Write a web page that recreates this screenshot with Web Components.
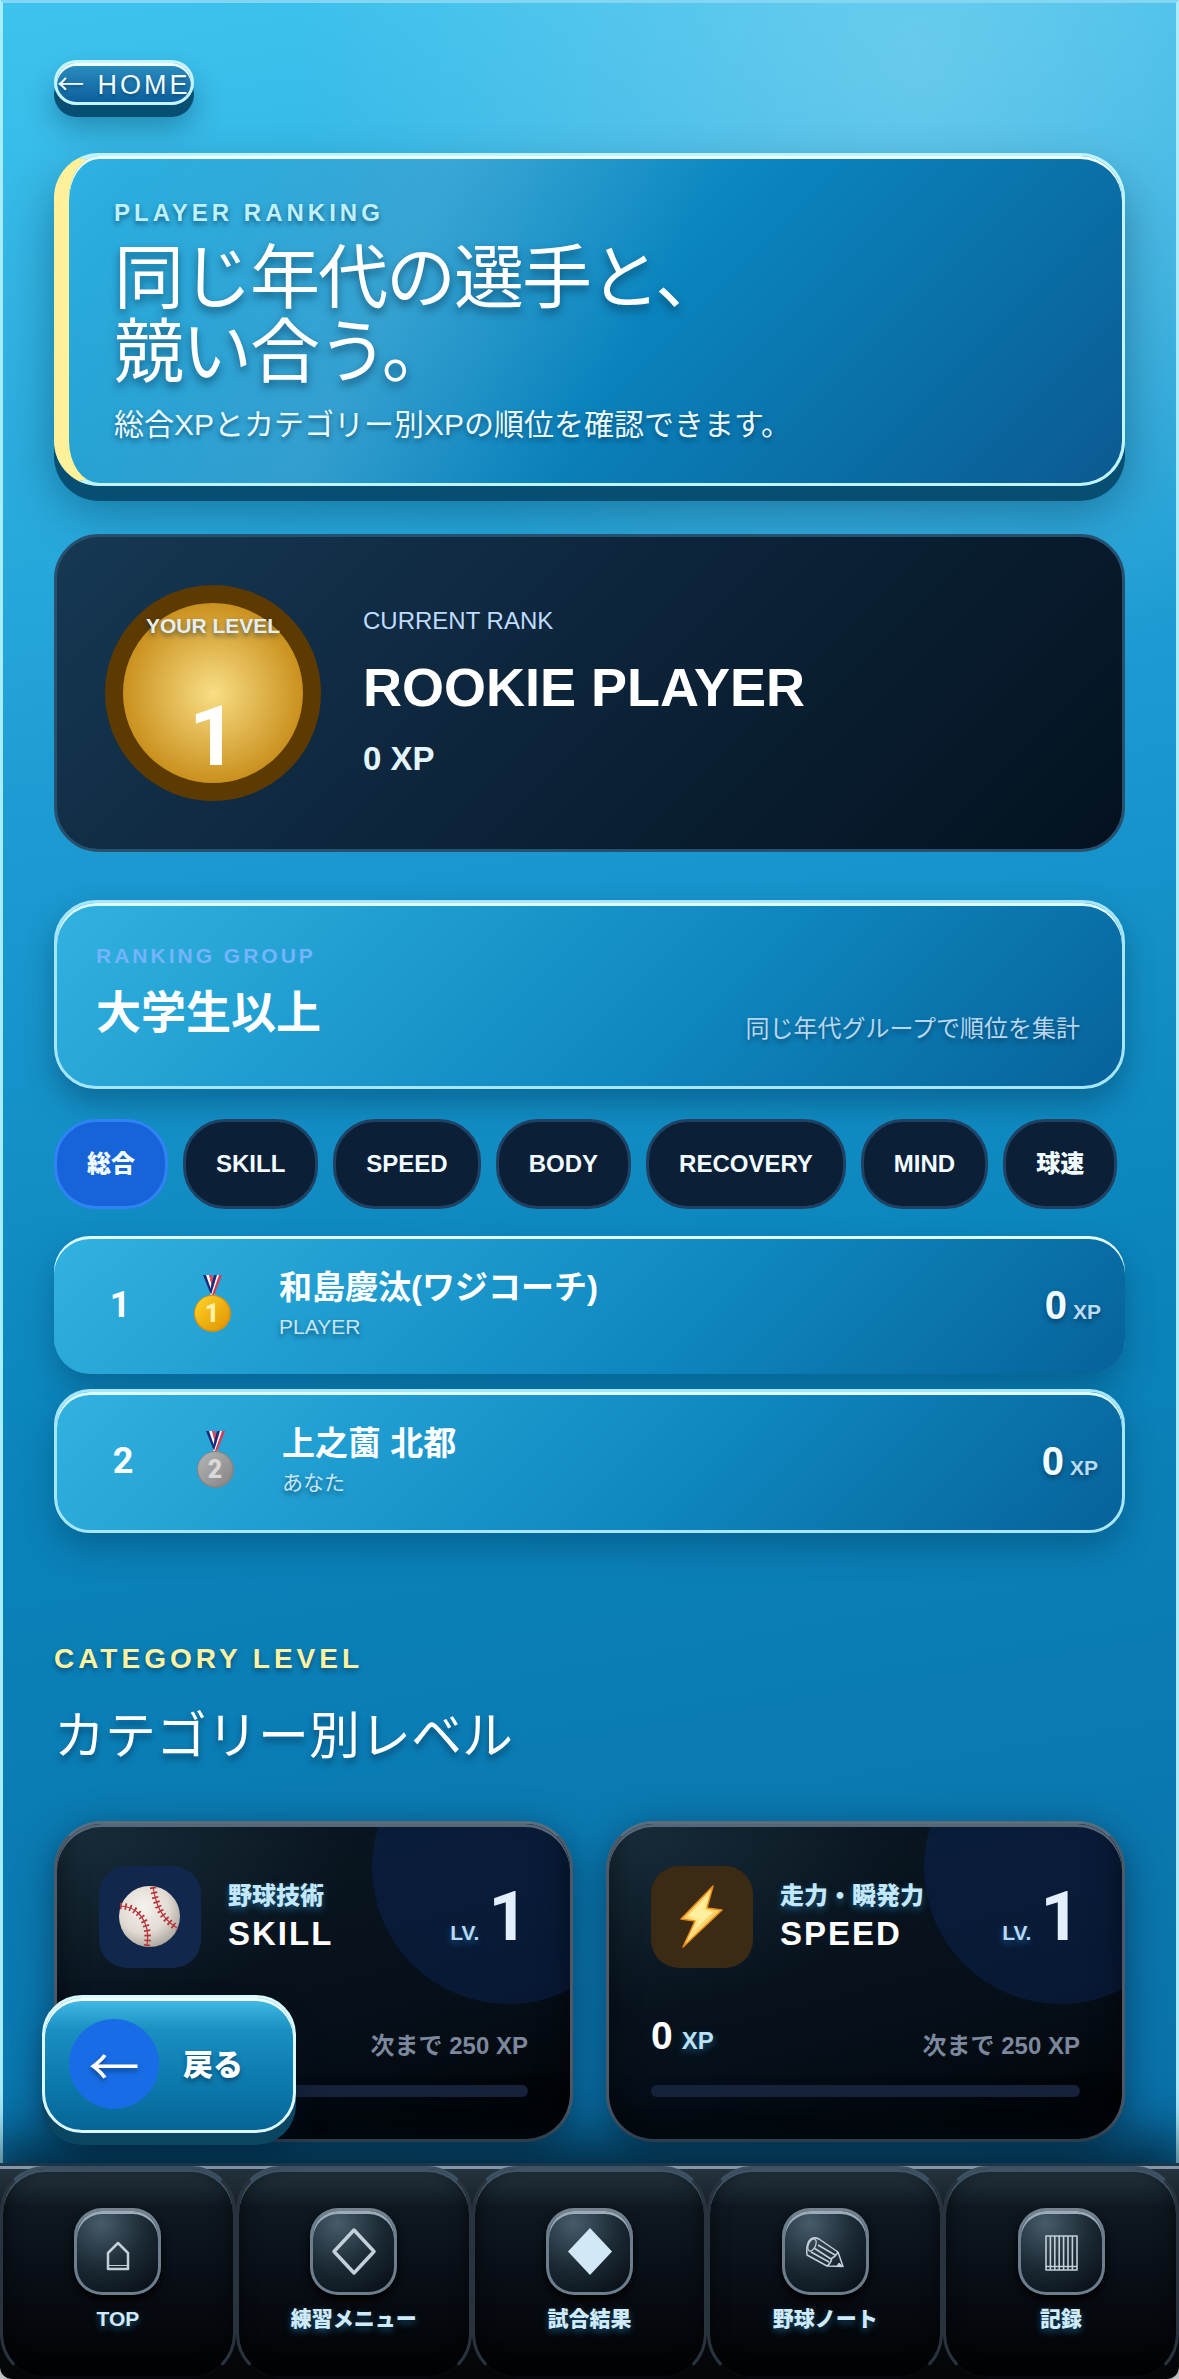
<!DOCTYPE html>
<html lang="ja">
<head>
<meta charset="UTF-8">
<meta name="viewport" content="width=device-width, initial-scale=1">
<title>Player Ranking</title>
<style>
    * { box-sizing: border-box; }
    body {
        margin: 0;
        background: #fff;
        color: #fff;
        font-family: "Liberation Sans", "Noto Sans CJK JP", sans-serif;
        --num: Roboto, "Liberation Sans", sans-serif;
        --soft: 0 3px 5px rgba(0, 38, 66, .55);
        --glow: 0 3px 7px rgba(40, 150, 215, .5);
        --blue: linear-gradient(135deg, #31b2e0 0%, #0f88c0 58%, #07629a 100%);
    }
    .arrow { font-family: "Noto Sans CJK JP", sans-serif; }
</style>
</head>
<body>
<ranking-app>
    <home-link href="#home"><span class="arrow">←</span> HOME</home-link>
    <ranking-hero>
        <span slot="eyebrow">PLAYER RANKING</span>
        <span slot="title">同じ年代の選手と、<br>競い合う。</span>
        <span slot="text">総合XPとカテゴリー別XPの順位を確認できます。</span>
    </ranking-hero>
    <level-card level="1" rank="ROOKIE PLAYER" xp="0"></level-card>
    <ranking-group>
        <span slot="name">大学生以上</span>
        <span slot="note">同じ年代グループで順位を集計</span>
    </ranking-group>
    <category-tabs items="総合,SKILL,SPEED,BODY,RECOVERY,MIND,球速"></category-tabs>
    <ranking-list>
        <ranking-row place="1" name="和島慶汰(ワジコーチ)" sub="PLAYER" xp="0"></ranking-row>
        <ranking-row place="2" name="上之薗 北都" sub="あなた" xp="0" me></ranking-row>
    </ranking-list>
    <section-heading>
        <span slot="eyebrow">CATEGORY LEVEL</span>
        カテゴリー別レベル
    </section-heading>
    <category-grid>
        <category-card name="SKILL" label="野球技術" icon="ball" level="1" xp="0" next="250"></category-card>
        <category-card name="SPEED" label="走力・瞬発力" icon="bolt" level="1" xp="0" next="250"></category-card>
    </category-grid>
    <back-button slot="footer">戻る</back-button>
    <bottom-nav slot="footer">
        <nav-item icon="home" href="#top">TOP</nav-item>
        <nav-item icon="diamond" href="#menu">練習メニュー</nav-item>
        <nav-item icon="diamondFill" href="#result">試合結果</nav-item>
        <nav-item icon="pencil" href="#note">野球ノート</nav-item>
        <nav-item icon="record" href="#record">記録</nav-item>
    </bottom-nav>
</ranking-app>

<script>
const ICONS = {
    ball: `
        <svg viewBox="0 0 102 102" aria-hidden="true">
            <defs><radialGradient id="b" cx=".4" cy=".35" r=".7">
                <stop offset="0" stop-color="#f6f3ee"/><stop offset=".6" stop-color="#e0dad2"/><stop offset="1" stop-color="#a9a29b"/>
            </radialGradient></defs>
            <circle cx="50.500" cy="50.500" r="30.500" fill="url(#b)"/>
            <g fill="none" stroke="#b8323a">
                <path d="M54 21C57 38 61 51 78 62M21 40C38 40 52 55 48 80" stroke-width="1.200"/>
                <path d="M54 21C57 38 61 51 78 62M21 40C38 40 52 55 48 80" stroke-width="6.500" stroke-dasharray="1.700 3.200"/>
            </g>
        </svg>`,
    bolt: `
        <svg viewBox="0 0 102 102" aria-hidden="true">
            <defs><linearGradient id="z" x1="0" y1="0" x2="1" y2="1">
                <stop offset="0" stop-color="#f08c1c"/><stop offset=".45" stop-color="#ffe98a"/><stop offset="1" stop-color="#f39a1d"/>
            </linearGradient></defs>
            <path d="M62 20L30 53L44 55L32 81L71 44L56 42Z" fill="url(#z)" stroke="#e58a1a" stroke-width="1.500" stroke-linejoin="round"/>
            <path d="M57 30L37 50L49 53L42 65L62 46L51 44Z" fill="#fff0a0"/>
        </svg>`,
    home: '<path d="M31 58V42L41 32L51 42V58Z" stroke-width="2.500"/><path d="M31 54.500H51" stroke-width="1.200"/>',
    diamond: '<path d="M41 19L61 40.500L41 62L21 40.500Z" stroke-width="3.500"/>',
    diamondFill: '<path d="M41 17L63 40.500L41 64L19 40.500Z" fill="#d3e8f7" stroke="none"/>',
    pencil: '<path d="M22 44L42 55L58 55.500L53 41L34 28Q28 25 24 30Q21 35 22 44ZM42 55Q46 52 47 47Q50 46 53 41M26 41L44 51M29 37L46 48M33 34L50 44" stroke-width="1.500"/><ellipse cx="27" cy="34" rx="3.500" ry="6.500" transform="rotate(25 27 34)" stroke-width="1.300"/><path d="M54 52L58 55.500L52 55Z" fill="#c6d3dd"/>',
    record: '<path d="M25 25H56V59H25ZM25 55.500H56M29.400 25V59M33.800 25V59M38.200 25V59M42.600 25V59M47 25V59M51.400 25V59" stroke-width="1.600"/>'
};

const MEDALS = {
    1: { light: '#ffd428', dark: '#e09200', text: '#fff0a8' },
    2: { light: '#b4b4b4', dark: '#858585', text: '#d9d9d9' }
};

class BaseElement extends HTMLElement {
    constructor() {
        super();
        this.attachShadow({ mode: 'open' });
    }
    connectedCallback() {
        this.shadowRoot.innerHTML = `<style>* { box-sizing: border-box; } p, h1, h2, h3 { margin: 0; }${this.styles()}</style>${this.render()}`;
    }
    attr(name) {
        return this.getAttribute(name) || '';
    }
}

// Page frame: scrolling content plus the bar that stays at the bottom
class RankingApp extends BaseElement {
    styles() {
        return `
            :host { display: flex; flex-direction: column; min-height: 100vh; }
            main {
                flex: 1;
                isolation: isolate;
                padding: 57px 51px 21px;
                border: 3px solid #a8edff;
                border-top-color: #82d6f3;
                border-bottom: 0;
                background:
                    radial-gradient(circle at 78% 60px, rgba(255,255,255,.25), rgba(255,255,255,0) 620px),
                    linear-gradient(170deg, #3ec3ee 0%, #1d9cd3 34%, #0a84bb 62%, #0a70a8 100%);
            }
            footer { position: sticky; bottom: 0; z-index: 2; }
        `;
    }
    render() {
        return '<main><slot></slot></main><footer><slot name="footer"></slot></footer>';
    }
}

class HomeLink extends BaseElement {
    styles() {
        return `
            :host { display: flex; }
            a {
                height: 45px; line-height: 39px; padding: 0;
                border: 3px solid #c4f4ff; border-radius: 23px;
                font-size: 27px; letter-spacing: 3px; white-space: nowrap;
                color: #f2fcff; text-decoration: none;
                text-shadow: 0 2px 3px rgba(0,38,66,.4);
                background: linear-gradient(#2b8fc0, #0d5f9c);
                box-shadow: inset 0 3px 0 #f0fdff, 0 12px 0 #064e72, 0 21px 30px rgba(0,50,80,.4);
            }
        `;
    }
    render() {
        return `<a href="${this.attr('href')}"><slot></slot></a>`;
    }
}

class RankingHero extends BaseElement {
    styles() {
        return `
            :host { display: block; margin-top: 48px; }
            section {
                padding: 42px 45px 36px;
                border: 3px solid #c0f5ff; border-left: 15px solid #fff09a; border-radius: 45px;
                background:
                    linear-gradient(116deg, rgba(255,255,255,0) 6%, rgba(255,255,255,.13) 32%, rgba(255,255,255,0) 54%),
                    linear-gradient(135deg, #2fb3e3 0%, #0a83bd 54%, #0b5a91 100%);
                box-shadow: inset 0 3px 0 #f0fdff, 0 15px 0 #064e72, 0 24px 48px rgba(0,50,80,.45);
            }
            p { text-shadow: var(--soft); }
            .eyebrow { font-size: 24px; line-height: 30px; font-weight: 700; letter-spacing: 4px; color: #bdf1ff; }
            h1 { margin: 14px 0 12px; font-size: 70px; line-height: 74px; font-weight: 400; letter-spacing: -2px; text-shadow: 0 5px 8px rgba(0,38,66,.55); }
            .text { font-size: 30px; line-height: 45px; color: #ebfaff; }
        `;
    }
    render() {
        return `
            <section>
                <p class="eyebrow"><slot name="eyebrow"></slot></p>
                <h1><slot name="title"></slot></h1>
                <p class="text"><slot name="text"></slot></p>
            </section>
        `;
    }
}

class LevelCard extends BaseElement {
    styles() {
        return `
            :host { display: block; margin-top: 48px; }
            section {
                display: flex; align-items: center; gap: 42px;
                padding: 48px; border: 3px solid #27506f; border-radius: 45px;
                background: linear-gradient(135deg, #163853 0%, #0c2339 50%, #04121f 100%);
            }
            .badge {
                flex: none; display: flex; flex-direction: column; align-items: center; justify-content: center; gap: 57px;
                width: 216px; height: 216px; padding-top: 6px; border: 18px solid #5d3a00; border-radius: 50%;
                background: radial-gradient(circle, #f8de85 0%, #c98f1c 72%);
            }
            .badge span { font-size: 21px; line-height: 24px; font-weight: 700; white-space: nowrap; color: #e6edf0; text-shadow: var(--soft); }
            .badge strong { font: 700 84px/84px var(--num); }
            .info { display: grid; gap: 18px; }
            .label { font-size: 24px; line-height: 30px; color: #bfdcff; }
            h2 { font-size: 54px; line-height: 66px; }
            .xp { font-size: 33px; line-height: 42px; font-weight: 700; color: #e3f6ff; }
        `;
    }
    render() {
        return `
            <section>
                <div class="badge"><span>YOUR LEVEL</span><strong>${this.attr('level')}</strong></div>
                <div class="info">
                    <p class="label">CURRENT RANK</p>
                    <h2>${this.attr('rank')}</h2>
                    <p class="xp">${this.attr('xp')} XP</p>
                </div>
            </section>
        `;
    }
}

class RankingGroup extends BaseElement {
    styles() {
        return `
            :host { display: block; margin-top: 48px; }
            section {
                display: flex; align-items: flex-end; justify-content: space-between;
                padding: 39px 42px 39px 39px; border: 3px solid #a6e6fb; border-radius: 42px;
                background: var(--blue);
                box-shadow: inset 0 3px 0 #dcfaff, 0 15px 30px rgba(0,50,80,.4);
            }
            .eyebrow { margin-bottom: 12px; font-size: 21px; line-height: 27px; font-weight: 700; letter-spacing: 3px; color: #74b4fb; }
            h2 { font-size: 45px; line-height: 66px; }
            .note { font-size: 24px; line-height: 36px; color: #b5d7f2; text-shadow: var(--soft); }
        `;
    }
    render() {
        return `
            <section>
                <div>
                    <p class="eyebrow">RANKING GROUP</p>
                    <h2><slot name="name"></slot></h2>
                </div>
                <p class="note"><slot name="note"></slot></p>
            </section>
        `;
    }
}

class CategoryTabs extends BaseElement {
    styles() {
        return `
            :host { display: flex; gap: 15px; margin-top: 30px; overflow: hidden; }
            button {
                flex: none; height: 90px; padding: 0 30px;
                border: 3px solid #1f4264; border-radius: 42px;
                background: #0b1f37; color: #f2fbff;
                font: 900 24px/36px "Liberation Sans", "Noto Sans CJK JP", sans-serif;
            }
            button.active { background: #1763d8; border-color: #2f83f5; }
        `;
    }
    render() {
        return this.attr('items').split(',').map((item, i) =>
            `<button type="button" class="${i === 0 ? 'active' : ''}" aria-pressed="${i === 0}">${item}</button>`
        ).join('');
    }
}

class RankingList extends BaseElement {
    styles() {
        return ':host { display: grid; gap: 15px; margin-top: 27px; }';
    }
    render() {
        return '<slot></slot>';
    }
}

class RankingRow extends BaseElement {
    styles() {
        return `
            :host {
                display: grid; grid-template-columns: 84px 69px 1fr auto; column-gap: 24px; align-items: center;
                height: 138px; padding: 0 24px; border-radius: 36px;
                background: var(--blue);
                box-shadow: inset 0 3px 0 #dcfaff, 0 15px 30px rgba(0,50,80,.35);
                box-sizing: border-box;
            }
            :host([me]) { height: 144px; border: 3px solid #a6e6fb; }
            .place { font: 700 36px/42px var(--num); text-align: center; }
            svg { display: block; width: 54px; height: 60px; }
            svg text { font: 900 25px Roboto, sans-serif; }
            h3 { font-size: 33px; line-height: 45px; }
            .sub { margin-bottom: 3px; font-size: 21px; line-height: 33px; color: #c4e6fa; text-shadow: var(--soft); }
            .xp { display: flex; align-items: baseline; gap: 6px; line-height: 48px; font-weight: 700; text-shadow: var(--soft); }
            .xp b { font-size: 40px; color: #f0fcff; }
            .xp small { font-size: 21px; line-height: 24px; color: #b9dcf5; }
        `;
    }
    render() {
        const place = this.attr('place');
        const medal = MEDALS[place];
        return `
            <div class="place">${place}</div>
            <svg viewBox="0 0 54 60" aria-hidden="true">
                <defs><linearGradient id="m" x1="0" y1="0" x2="1" y2="1">
                    <stop offset="0" stop-color="${medal.light}"/><stop offset="1" stop-color="${medal.dark}"/>
                </linearGradient></defs>
                <path d="M17 0H22L29 20H25Z" fill="#1c2a78"/>
                <path d="M20 0H23L29 20H27Z" fill="#fff"/>
                <path d="M23 0H26L30 15L28 20Z" fill="#e0455a"/>
                <path d="M36 0H31L24 20H28Z" fill="#d83a50"/>
                <path d="M33 0H30L24 20H26Z" fill="#fff"/>
                <path d="M31 0H28L24 15L25 20Z" fill="#1c2a78"/>
                <circle cx="26.500" cy="38.500" r="18.500" fill="${medal.dark}"/>
                <circle cx="26" cy="38" r="17" fill="url(#m)"/>
                <text x="26" y="47" text-anchor="middle" fill="${medal.text}">${place}</text>
            </svg>
            <div><h3>${this.attr('name')}</h3><p class="sub">${this.attr('sub')}</p></div>
            <div class="xp"><b>${this.attr('xp')}</b><small>XP</small></div>
        `;
    }
}

class SectionHeading extends BaseElement {
    styles() {
        return `
            :host { display: block; margin: 108px 0 48px; }
            p { margin-bottom: 24px; font-size: 28px; line-height: 36px; font-weight: 700; letter-spacing: 4px; color: #fff3a3; text-shadow: var(--soft); }
            h2 { font-size: 51px; line-height: 72px; font-weight: 400; text-shadow: 0 5px 6px rgba(0,38,66,.5); }
        `;
    }
    render() {
        return '<p><slot name="eyebrow"></slot></p><h2><slot></slot></h2>';
    }
}

class CategoryGrid extends BaseElement {
    styles() {
        return ':host { display: grid; grid-template-columns: 1fr 1fr; gap: 33px; }';
    }
    render() {
        return '<slot></slot>';
    }
}

class CategoryCard extends BaseElement {
    styles() {
        return `
            article {
                position: relative; overflow: hidden;
                padding: 42px; border: 3px solid #4c5a69; border-top-color: #5b6c7d; border-radius: 48px;
                background:
                    radial-gradient(ellipse at 0 0, rgba(60,100,120,.3), rgba(60,100,120,0) 42%),
                    linear-gradient(165deg, #0a1722 0%, #06101a 60%, #010204 100%);
            }
            :host { display: block; border-radius: 48px; box-shadow: 0 9px 36px rgba(0,20,40,.5); }
            article::before { content: ""; position: absolute; top: -93px; right: -75px; width: 273px; height: 273px; border-radius: 50%; background: rgba(14,42,100,.38); }
            article::after { content: ""; position: absolute; inset: 0; border-radius: 45px; box-shadow: inset 0 3px 0 #56677a, inset 0 -24px 30px rgba(0,0,0,.5); }
            .head, .meta { position: relative; z-index: 1; display: flex; }
            .head { align-items: center; gap: 27px; height: 102px; }
            .icon { flex: none; width: 102px; height: 102px; border-radius: 28px; background: #11274b; }
            .icon.bolt { background: #3c2b14; }
            .icon svg { display: block; }
            .label { font-size: 24px; line-height: 36px; font-weight: 900; white-space: nowrap; color: #c4e8fb; text-shadow: var(--glow); }
            h3 { margin-bottom: 3px; font-size: 33px; line-height: 39px; letter-spacing: 2px; }
            .level { display: flex; align-items: baseline; gap: 9px; margin-left: auto; }
            .level span { font-size: 21px; line-height: 24px; font-weight: 700; color: #b9d8f7; text-shadow: var(--glow); }
            .level strong { font: 700 69px/72px var(--num); color: #e3efff; }
            .meta { align-items: flex-end; justify-content: space-between; height: 57px; margin: 39px 0 21px; font-weight: 700; }
            .xp { display: flex; align-items: baseline; gap: 9px; font-size: 39px; line-height: 57px; }
            .xp span { font-size: 24px; line-height: 27px; color: #b9e2f8; text-shadow: var(--glow); }
            .next { font-size: 24px; line-height: 36px; color: #7b889d; }
            .bar { position: relative; z-index: 1; height: 12px; border-radius: 6px; background: #17233b; }
        `;
    }
    render() {
        const icon = this.attr('icon');
        return `
            <article>
                <div class="head">
                    <div class="icon ${icon}">${ICONS[icon]}</div>
                    <div><p class="label">${this.attr('label')}</p><h3>${this.attr('name')}</h3></div>
                    <div class="level"><span>LV.</span><strong>${this.attr('level')}</strong></div>
                </div>
                <div class="meta">
                    <p class="xp">${this.attr('xp')}<span>XP</span></p>
                    <p class="next">次まで ${this.attr('next')} XP</p>
                </div>
                <div class="bar" role="progressbar" aria-label="${this.attr('name')}" aria-valuemin="0" aria-valuemax="${this.attr('next')}" aria-valuenow="${this.attr('xp')}"></div>
            </article>
        `;
    }
}

// Floating button that sits just above the bottom bar
class BackButton extends BaseElement {
    styles() {
        return `
            :host { position: absolute; z-index: 2; left: 42px; bottom: calc(100% + 30px); }
            button {
                display: flex; align-items: center; gap: 24px;
                height: 138px; padding: 0 50px 0 24px;
                border: 3px solid #d9f9ff; border-radius: 40px;
                background: linear-gradient(#43bde6 0%, #1a8fc2 24%, #0d7cb0 60%, #076596 100%);
                box-shadow: inset 0 3px 0 #f4feff, 0 12px 0 #0a4562, 0 18px 30px rgba(0,20,40,.4);
                color: #fff; font: 900 30px/45px "Liberation Sans", "Noto Sans CJK JP", sans-serif;
                text-shadow: var(--soft);
            }
            i { width: 90px; height: 90px; border-radius: 50%; background: #186de6; font: 400 51px/90px "Noto Sans CJK JP", sans-serif; }
        `;
    }
    render() {
        return '<button type="button"><i>←</i><span><slot></slot></span></button>';
    }
}

class BottomNav extends BaseElement {
    styles() {
        return `
            nav {
                display: grid; grid-template-columns: repeat(5, 1fr);
                border-top: 3px solid #1b374c; border-radius: 0 0 12px 12px; overflow: hidden;
                background: linear-gradient(#8496a8 0 3px, #25333e 3px, #10171e 60px, #030507);
            }
            :host { display: block; border-radius: 0 0 12px 12px; box-shadow: 0 -12px 54px 12px rgba(0,18,30,.75); }
        `;
    }
    render() {
        return '<nav><slot></slot></nav>';
    }
}

class NavItem extends BaseElement {
    styles() {
        return `
            a {
                display: flex; flex-direction: column; align-items: center; gap: 9px;
                padding: 39px 0 42px; border: 3px solid #29333d; border-top-color: #3d5162; border-bottom-color: #05080c; border-radius: 45px;
                background: linear-gradient(#273742 0, #0e1820 38px, #090e16 110px, #010203 100%);
                box-shadow: inset 0 3px 0 #3f5364, inset 0 0 18px rgba(0,0,0,.55);
                color: #cfeaf9; text-decoration: none;
                font-size: 21px; line-height: 30px; font-weight: 900; white-space: nowrap;
                text-shadow: var(--glow);
            }
            svg {
                width: 87px; height: 87px; border: 3px solid #6c7e8e; border-top-color: #75828d; border-radius: 28px;
                background: radial-gradient(circle at 30% 15%, #475b69 0%, #1b2a35 50%, #050b11 100%);
                box-shadow: inset 0 3px 0 #9aabb9, 0 5px 8px #000;
                fill: none; stroke: #c3cfd9; stroke-linejoin: round;
            }
        `;
    }
    render() {
        return `<a href="${this.attr('href')}"><svg viewBox="0 0 81 81" aria-hidden="true">${ICONS[this.attr('icon')]}</svg><slot></slot></a>`;
    }
}

customElements.define('ranking-app', RankingApp);
customElements.define('home-link', HomeLink);
customElements.define('ranking-hero', RankingHero);
customElements.define('level-card', LevelCard);
customElements.define('ranking-group', RankingGroup);
customElements.define('category-tabs', CategoryTabs);
customElements.define('ranking-list', RankingList);
customElements.define('ranking-row', RankingRow);
customElements.define('section-heading', SectionHeading);
customElements.define('category-grid', CategoryGrid);
customElements.define('category-card', CategoryCard);
customElements.define('back-button', BackButton);
customElements.define('bottom-nav', BottomNav);
customElements.define('nav-item', NavItem);
</script>
</body>
</html>
